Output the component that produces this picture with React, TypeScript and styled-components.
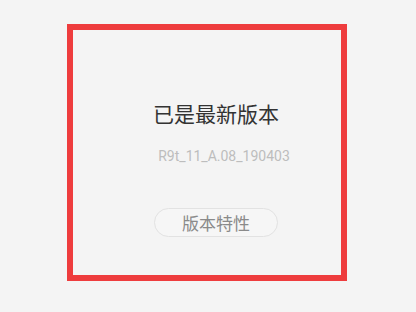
import React from 'react';
import styled, { createGlobalStyle } from 'styled-components';

const GlobalStyle = createGlobalStyle`
    html, body {
        margin: 0;
        padding: 0;
        background: #f4f4f4;
    }
    body {
        font-family: Roboto, "Noto Sans CJK SC", "Noto Sans", sans-serif;
    }
`;

const Page = styled.div`
    width: 416px;
    height: 312px;
    padding: 24px 0 0 67px;
    box-sizing: border-box;
    background: #f4f4f4;
`;

const Frame = styled.div`
    width: 280px;
    height: 257px;
    box-sizing: border-box;
    border: 6px solid #ee3c3d;
    padding: 71px 0 0 18px;
    display: flex;
    flex-direction: column;
    align-items: center;
`;

const Title = styled.div`
    font-family: "Noto Sans CJK SC", sans-serif;
    font-size: 21px;
    line-height: 24px;
    color: #333;
`;

const Version = styled.div`
    margin-top: 22px;
    padding-left: 16px;
    font-family: Roboto, sans-serif;
    font-size: 14px;
    line-height: 18px;
    color: #bdbdbd;
`;

const FeatureButton = styled.button`
    margin-top: 43px;
    width: 124px;
    height: 29px;
    box-sizing: border-box;
    border: 1px solid #e2e2e2;
    border-radius: 15px;
    background: #f6f6f6;
    font-family: "Noto Sans CJK SC", sans-serif;
    font-size: 17px;
    line-height: 27px;
    color: #8a8a8a;
    padding: 0;
    cursor: pointer;
`;

const App = () => {
    return (
        <Page>
            <GlobalStyle />
            <Frame>
                <Title>已是最新版本</Title>
                <Version>R9t_11_A.08_190403</Version>
                <FeatureButton>版本特性</FeatureButton>
            </Frame>
        </Page>
    );
};

export default App;
